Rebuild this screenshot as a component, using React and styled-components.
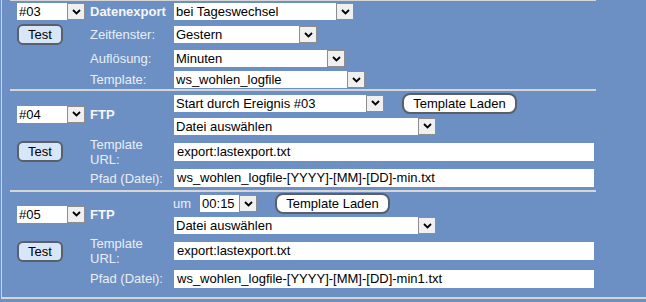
import React from 'react';
import styled, { createGlobalStyle } from 'styled-components';

const GlobalStyle = createGlobalStyle`
  html, body {
    margin: 0;
    padding: 0;
    background: #6c90c4;
  }
  body {
    font-family: "Liberation Sans", Arial, sans-serif;
    font-size: 13px;
    color: #000;
  }
`;

const Frame = styled.div`
  margin-left: 1px;
  width: 644px;
  border-left: 1px solid #cfd3da;
  border-bottom: 2px solid #d6d6d6;
  padding-left: 8px;
`;

const Section = styled.div`
  width: 586px;
  display: grid;
  grid-template-columns: 80px 84px 422px;
  grid-template-rows: ${(p) => p.$rows};
  align-items: center;
  border-top: ${(p) => (p.$first ? '1px solid #d6d6d6' : 'none')};
  border-bottom: ${(p) => (p.$last ? 'none' : '2px solid #d6d6d6')};
  padding-bottom: ${(p) => (p.$last ? '6px' : '0')};
`;

const LeftCell = styled.div`
  grid-column: 1;
  grid-row: ${(p) => p.$row};
  padding-left: 7px;
  display: flex;
  align-items: center;
`;

const Label = styled.div`
  grid-column: 2;
  grid-row: ${(p) => p.$row};
  color: #e9eef7;
  line-height: 15px;
  font-weight: ${(p) => (p.$bold ? 'bold' : 'normal')};
  ${(p) => p.$bold && 'color: #f6f6f6;'}
`;

const FieldCell = styled.div`
  grid-column: 3;
  grid-row: ${(p) => p.$row};
  display: flex;
  align-items: center;
`;

const SelectBox = styled.div`
  display: flex;
  width: ${(p) => p.$width}px;
  height: 17px;
  background: #fff;
`;

const SelectText = styled.div`
  flex: 1;
  padding-left: 2px;
  line-height: 17px;
  white-space: nowrap;
  overflow: hidden;
`;

const ArrowButton = styled.div`
  width: 16px;
  height: 15px;
  border: 1px solid #8d8d8d;
  background: #f0f0f0;
  display: flex;
  align-items: center;
  justify-content: center;
`;

const TextField = styled.div`
  width: 417px;
  height: 18px;
  background: #fff;
  padding-left: 3px;
  line-height: 18px;
  white-space: nowrap;
`;

const TestButton = styled.div`
  width: 42px;
  height: 17px;
  border: 2px solid #5a6069;
  border-radius: 6px;
  background: #d8e6fa;
  text-align: center;
  line-height: 17px;
`;

const LoadButton = styled.div`
  width: 111px;
  height: 17px;
  margin-left: 18px;
  border: 2px solid #5a6069;
  border-radius: 8px;
  background: #fff;
  text-align: center;
  line-height: 17px;
`;

const SmallLabel = styled.span`
  color: #e9eef7;
  margin-left: -1px;
  margin-right: 9px;
`;

const Chevron = () => (
  <svg width="9" height="6" viewBox="0 0 9 6">
    <path d="M1 1 L4.5 4.5 L8 1" fill="none" stroke="#000" strokeWidth="1.8" />
  </svg>
);

const Select = ({ width, children }) => (
  <SelectBox $width={width}>
    <SelectText>{children}</SelectText>
    <ArrowButton>
      <Chevron />
    </ArrowButton>
  </SelectBox>
);

const FtpSection = ({ id, trigger, last, path }) => (
  <Section $rows={last ? '23px 21px 30px 25px' : '24px 22px 29px 24px'} $last={last}>
    <LeftCell $row="1 / span 2">
      <Select width={68}>{id}</Select>
    </LeftCell>
    <Label $row="1 / span 2" $bold>FTP</Label>
    <FieldCell $row="1">{trigger}</FieldCell>
    <FieldCell $row="2">
      <Select width={262}>Datei auswählen</Select>
    </FieldCell>

    <LeftCell $row="3">
      <TestButton>Test</TestButton>
    </LeftCell>
    <Label $row="3">Template URL:</Label>
    <FieldCell $row="3">
      <TextField>export:lastexport.txt</TextField>
    </FieldCell>

    <Label $row="4">Pfad (Datei):</Label>
    <FieldCell $row="4">
      <TextField>{path}</TextField>
    </FieldCell>
  </Section>
);

const App = () => {
  return (
    <>
      <GlobalStyle />
      <Frame>
        <Section $rows="21px 25px 23px 19px" $first>
          <LeftCell $row="1">
            <Select width={68}>#03</Select>
          </LeftCell>
          <Label $row="1" $bold>Datenexport</Label>
          <FieldCell $row="1">
            <Select width={180}>bei Tageswechsel</Select>
          </FieldCell>

          <LeftCell $row="2">
            <TestButton>Test</TestButton>
          </LeftCell>
          <Label $row="2">Zeitfenster:</Label>
          <FieldCell $row="2">
            <Select width={143}>Gestern</Select>
          </FieldCell>

          <Label $row="3">Auflösung:</Label>
          <FieldCell $row="3">
            <Select width={171}>Minuten</Select>
          </FieldCell>

          <Label $row="4">Template:</Label>
          <FieldCell $row="4">
            <Select width={191}>ws_wohlen_logfile</Select>
          </FieldCell>
        </Section>

        <FtpSection
          id="#04"
          path="ws_wohlen_logfile-[YYYY]-[MM]-[DD]-min.txt"
          trigger={
            <>
              <Select width={210}>Start durch Ereignis #03</Select>
              <LoadButton>Template Laden</LoadButton>
            </>
          }
        />

        <FtpSection
          id="#05"
          last
          path="ws_wohlen_logfile-[YYYY]-[MM]-[DD]-min1.txt"
          trigger={
            <>
              <SmallLabel>um</SmallLabel>
              <Select width={57}>00:15</Select>
              <LoadButton>Template Laden</LoadButton>
            </>
          }
        />
      </Frame>
    </>
  );
};

export default App;
